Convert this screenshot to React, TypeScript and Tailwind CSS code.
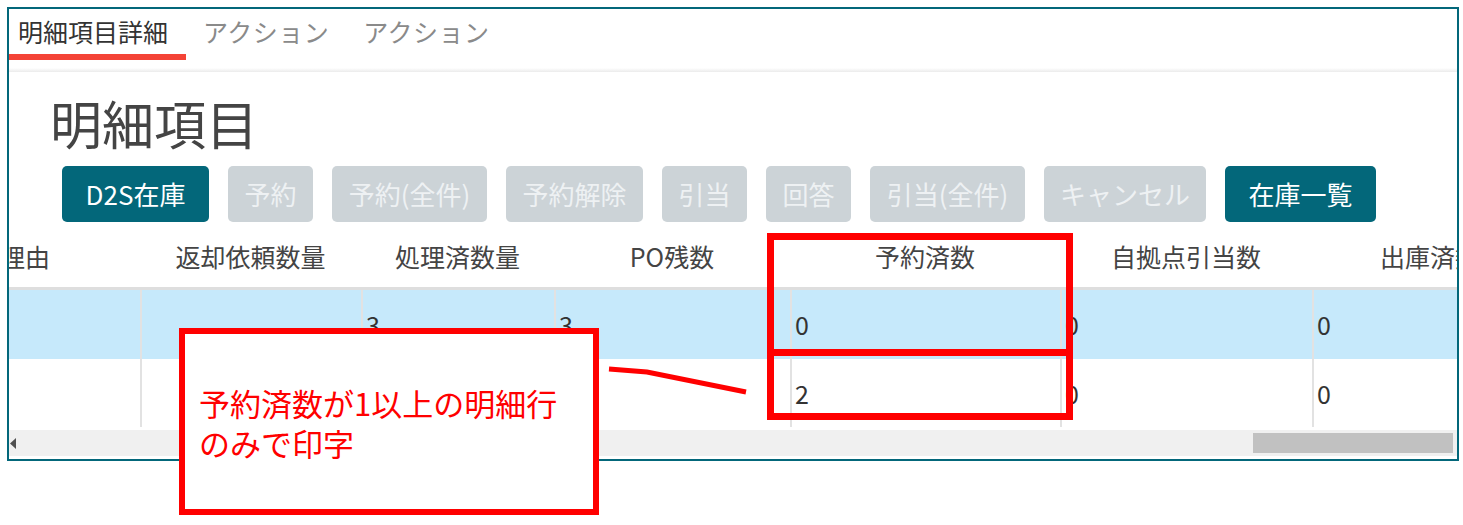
import React from 'react';

const FONT = "font-['Noto_Sans_CJK_JP','Noto_Sans',sans-serif]";

const tabs = ['アクション', 'アクション'];

const buttons = [
    { label: 'D2S在庫', w: 'w-[147px]', primary: true },
    { label: '予約', w: 'w-[85px]', primary: false },
    { label: '予約(全件)', w: 'w-[155px]', primary: false },
    { label: '予約解除', w: 'w-[137px]', primary: false },
    { label: '引当', w: 'w-[85px]', primary: false },
    { label: '回答', w: 'w-[85px]', primary: false },
    { label: '引当(全件)', w: 'w-[155px]', primary: false },
    { label: 'キャンセル', w: 'w-[162px]', primary: false },
    { label: '在庫一覧', w: 'w-[151px]', primary: true },
];

// table is scrolled sideways, so the first column is mostly hidden
const columns = [
    { title: '返却理由', w: 'w-[280px]' },
    { title: '返却依頼数量', w: 'w-[221px]' },
    { title: '処理済数量', w: 'w-[193px]' },
    { title: 'PO残数', w: 'w-[236px]' },
    { title: '予約済数', w: 'w-[270px]' },
    { title: '自拠点引当数', w: 'w-[252px]' },
    { title: '出庫済数', w: 'w-[236px]' },
];

const rows = [
    { values: ['', '', '3', '3', '0', '0', '0'], selected: true, h: 'h-[69px]' },
    { values: ['', '', '', '', '2', '0', '0'], selected: false, h: 'h-[68px]' },
];

export default function App() {
    return (
        <div className={`relative w-[1463px] h-[525px] bg-white pt-[7px] pl-[7px] overflow-hidden ${FONT}`}>
            <div className="w-[1452px] h-[454px] border-2 border-[#03677a] overflow-hidden flex flex-col">
                {/* Tabs */}
                <div className="flex h-[51px] shrink-0">
                    <div className="w-[177px] pl-[9px] flex items-center border-b-[6px] border-[#f44336] text-[25px] leading-none text-[#333]">
                        明細項目詳細
                    </div>
                    {tabs.map((t, i) => (
                        <div key={i} className="px-[17px] flex items-center pb-[6px] text-[25px] leading-none text-[#8a8a8a] tracking-[0.5px]">
                            {t}
                        </div>
                    ))}
                </div>
                <div className="h-[8px] shrink-0" />
                <div className="h-[4px] shrink-0 bg-linear-to-b from-white to-[#ebebeb]" />

                {/* Title */}
                <h1 className="ml-[41px] mt-[25px] text-[52px] leading-[52px] text-[#444] shrink-0">明細項目</h1>

                {/* Action buttons */}
                <div className="ml-[53px] mt-[17px] flex gap-[19px] shrink-0">
                    {buttons.map((b) => (
                        <div
                            key={b.label}
                            className={`${b.w} h-[56px] rounded-[5px] flex items-center justify-center text-[26px] leading-none ${b.primary ? 'bg-[#03677a] text-white' : 'bg-[#ccd3d7] text-[#eef1f3]'
                                }`}
                        >
                            {b.label}
                        </div>
                    ))}
                </div>

                {/* Grid */}
                <div className="mt-[4px] overflow-hidden shrink-0">
                    <div className="ml-[-149px] w-max">
                        <div className="flex h-[64px] border-b-[3px] border-[#dedede]">
                            {columns.map((c) => (
                                <div key={c.title} className={`${c.w} flex items-center justify-center text-[25px] leading-none text-[#444]`}>
                                    {c.title}
                                </div>
                            ))}
                        </div>
                        {rows.map((r, ri) => (
                            <div key={ri} className={`flex ${r.h} ${r.selected ? 'bg-[#c6e9fb]' : 'bg-white'}`}>
                                {columns.map((c, ci) => (
                                    <div
                                        key={c.title}
                                        className={`${c.w} border-l-2 border-[#e2e2e2] pl-[3px] flex items-center text-[25px] leading-none text-[#333]`}
                                    >
                                        {r.values[ci]}
                                    </div>
                                ))}
                            </div>
                        ))}
                    </div>
                </div>

                {/* Horizontal scrollbar */}
                <div className="mt-[3px] h-[26px] bg-[#f0f0f0] flex items-center shrink-0">
                    <svg width="7" height="11" viewBox="0 0 7 11" className="ml-[1px]">
                        <polygon points="6,0 6,11 0,5.5" fill="#505050" />
                    </svg>
                    <div className="flex-1" />
                    <div className="w-[200px] h-[20px] bg-[#c1c1c1]" />
                    <div className="w-[4px]" />
                </div>
            </div>

            {/* Annotations */}
            <div className="absolute left-[767px] top-[233px] w-[306px] h-[123px] border-[7px] border-[#ff0000]" />
            <div className="absolute left-[767px] top-[349px] w-[306px] h-[71px] border-[7px] border-[#ff0000]" />
            <svg className="absolute left-[600px] top-[360px]" width="155" height="40" viewBox="0 0 155 40">
                <polyline points="9,9 47,12 146,32" fill="none" stroke="#ff0000" strokeWidth="5" />
            </svg>
            <div className="absolute left-[179px] top-[328px] w-[420px] h-[187px] border-[6px] border-[#ff0000] bg-white pl-[14px] pt-[49px] text-[31px] leading-[40px] text-[#ff0000]">
                予約済数が1以上の明細行
                <br />
                のみで印字
            </div>
        </div>
    );
}
